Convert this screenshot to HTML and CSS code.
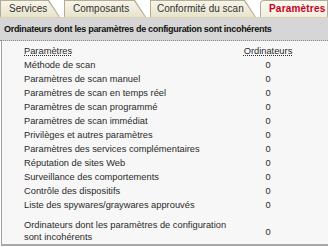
FILE: index.html
```html
<!DOCTYPE html>
<html lang="fr">
<head>
  <meta charset="UTF-8" />
  <title>Paramètres</title>
  <link rel="stylesheet" href="styles.css">
</head>
<body>

  <div class="tabs">
    <div class="tab t-services"><span>Services</span></div>
    <div class="tab t-comp"><span>Composants</span></div>
    <div class="tab t-conf"><span>Conformité du scan</span></div>
    <div class="tab active"><span>Paramètres</span></div>
  </div>

  <div class="title">Ordinateurs dont les paramètres de configuration sont incohérents</div>

  <div class="panel">
    <table class="grid">
      <tr class="head">
        <td><u>Paramètres</u></td>
        <td class="num"><u>Ordinateurs</u></td>
      </tr>
      <tr><td>Méthode de scan</td><td class="num">0</td></tr>
      <tr><td>Paramètres de scan manuel</td><td class="num">0</td></tr>
      <tr><td>Paramètres de scan en temps réel</td><td class="num">0</td></tr>
      <tr><td>Paramètres de scan programmé</td><td class="num">0</td></tr>
      <tr><td>Paramètres de scan immédiat</td><td class="num">0</td></tr>
      <tr><td>Privilèges et autres paramètres</td><td class="num">0</td></tr>
      <tr><td>Paramètres des services complémentaires</td><td class="num">0</td></tr>
      <tr><td>Réputation de sites Web</td><td class="num">0</td></tr>
      <tr><td>Surveillance des comportements</td><td class="num">0</td></tr>
      <tr><td>Contrôle des dispositifs</td><td class="num">0</td></tr>
      <tr><td>Liste des spywares/graywares approuvés</td><td class="num">0</td></tr>
      <tr class="total">
        <td>Ordinateurs dont les paramètres de configuration<br>sont incohérents</td>
        <td class="num">0</td>
      </tr>
    </table>
  </div>

</body>
</html>
```

FILE: styles.css
```css
body {
  margin: 0;
  width: 328px;
  font-family: "Liberation Sans", Arial, sans-serif;
  font-size: 9.3px;
  color: #222;
  background: #fff;
}
.tabs {
  display: flex;
  height: 17px;
  gap: 4px;
  background: #fff;
  border-bottom: 1px solid #d8d3b8;
}
.tab {
  padding: 1px 1px 0 1px;
  background: #b3ad93;
  clip-path: polygon(0 0, calc(100% - 11px) 0, 100% 100%, 0 100%);
}
.tab span {
  display: block;
  height: 16px;
  line-height: 16px;
  padding-left: 8px;
  font-size: 10px;
  color: #333;
  white-space: nowrap;
  background: linear-gradient(#f7f5ea, #e8e3cb);
  clip-path: polygon(0 0, calc(100% - 11px) 0, 100% 100%, 0 100%);
}
.t-services {
  width: 58px;
}
.t-comp {
  width: 80px;
}
.t-conf {
  width: 104px;
}
.t-conf span {
  padding-left: 6px;
}
.tab.active {
  flex: 1;
  border-top-left-radius: 4px;
  clip-path: none;
}
.tab.active span {
  padding-left: 8px;
  color: #c8001e;
  font-weight: bold;
  letter-spacing: 0.2px;
  border-top-left-radius: 3px;
  clip-path: none;
  background: linear-gradient(#fbfaf3, #f1eedf);
}
.title {
  height: 22px;
  line-height: 22px;
  padding-left: 4px;
  font-size: 9px;
  font-weight: bold;
  letter-spacing: -0.3px;
  white-space: nowrap;
  color: #111;
  background: #d6d6d6;
  border-bottom: 1px dotted #8c8c8c;
}
.panel {
  margin-left: 1px;
  padding: 3px 0 1px;
  background: #f7f7f7;
  border-left: 1px solid #a0a0a0;
  border-bottom: 2px solid #a8a8a8;
}
.grid {
  width: 100%;
  border-collapse: collapse;
}
.grid td {
  height: 14px;
  padding: 0 0 0 22px;
  line-height: 14px;
  color: #2a2a2a;
  white-space: nowrap;
}
.grid td.num {
  width: 72px;
  padding: 0 24px 0 0;
  text-align: center;
}
.grid u {
  text-decoration: underline dotted;
}
.grid tr.total td {
  padding-top: 7px;
  line-height: 12px;
}
.grid tr.total td.num {
  padding-top: 9px;
}
```
